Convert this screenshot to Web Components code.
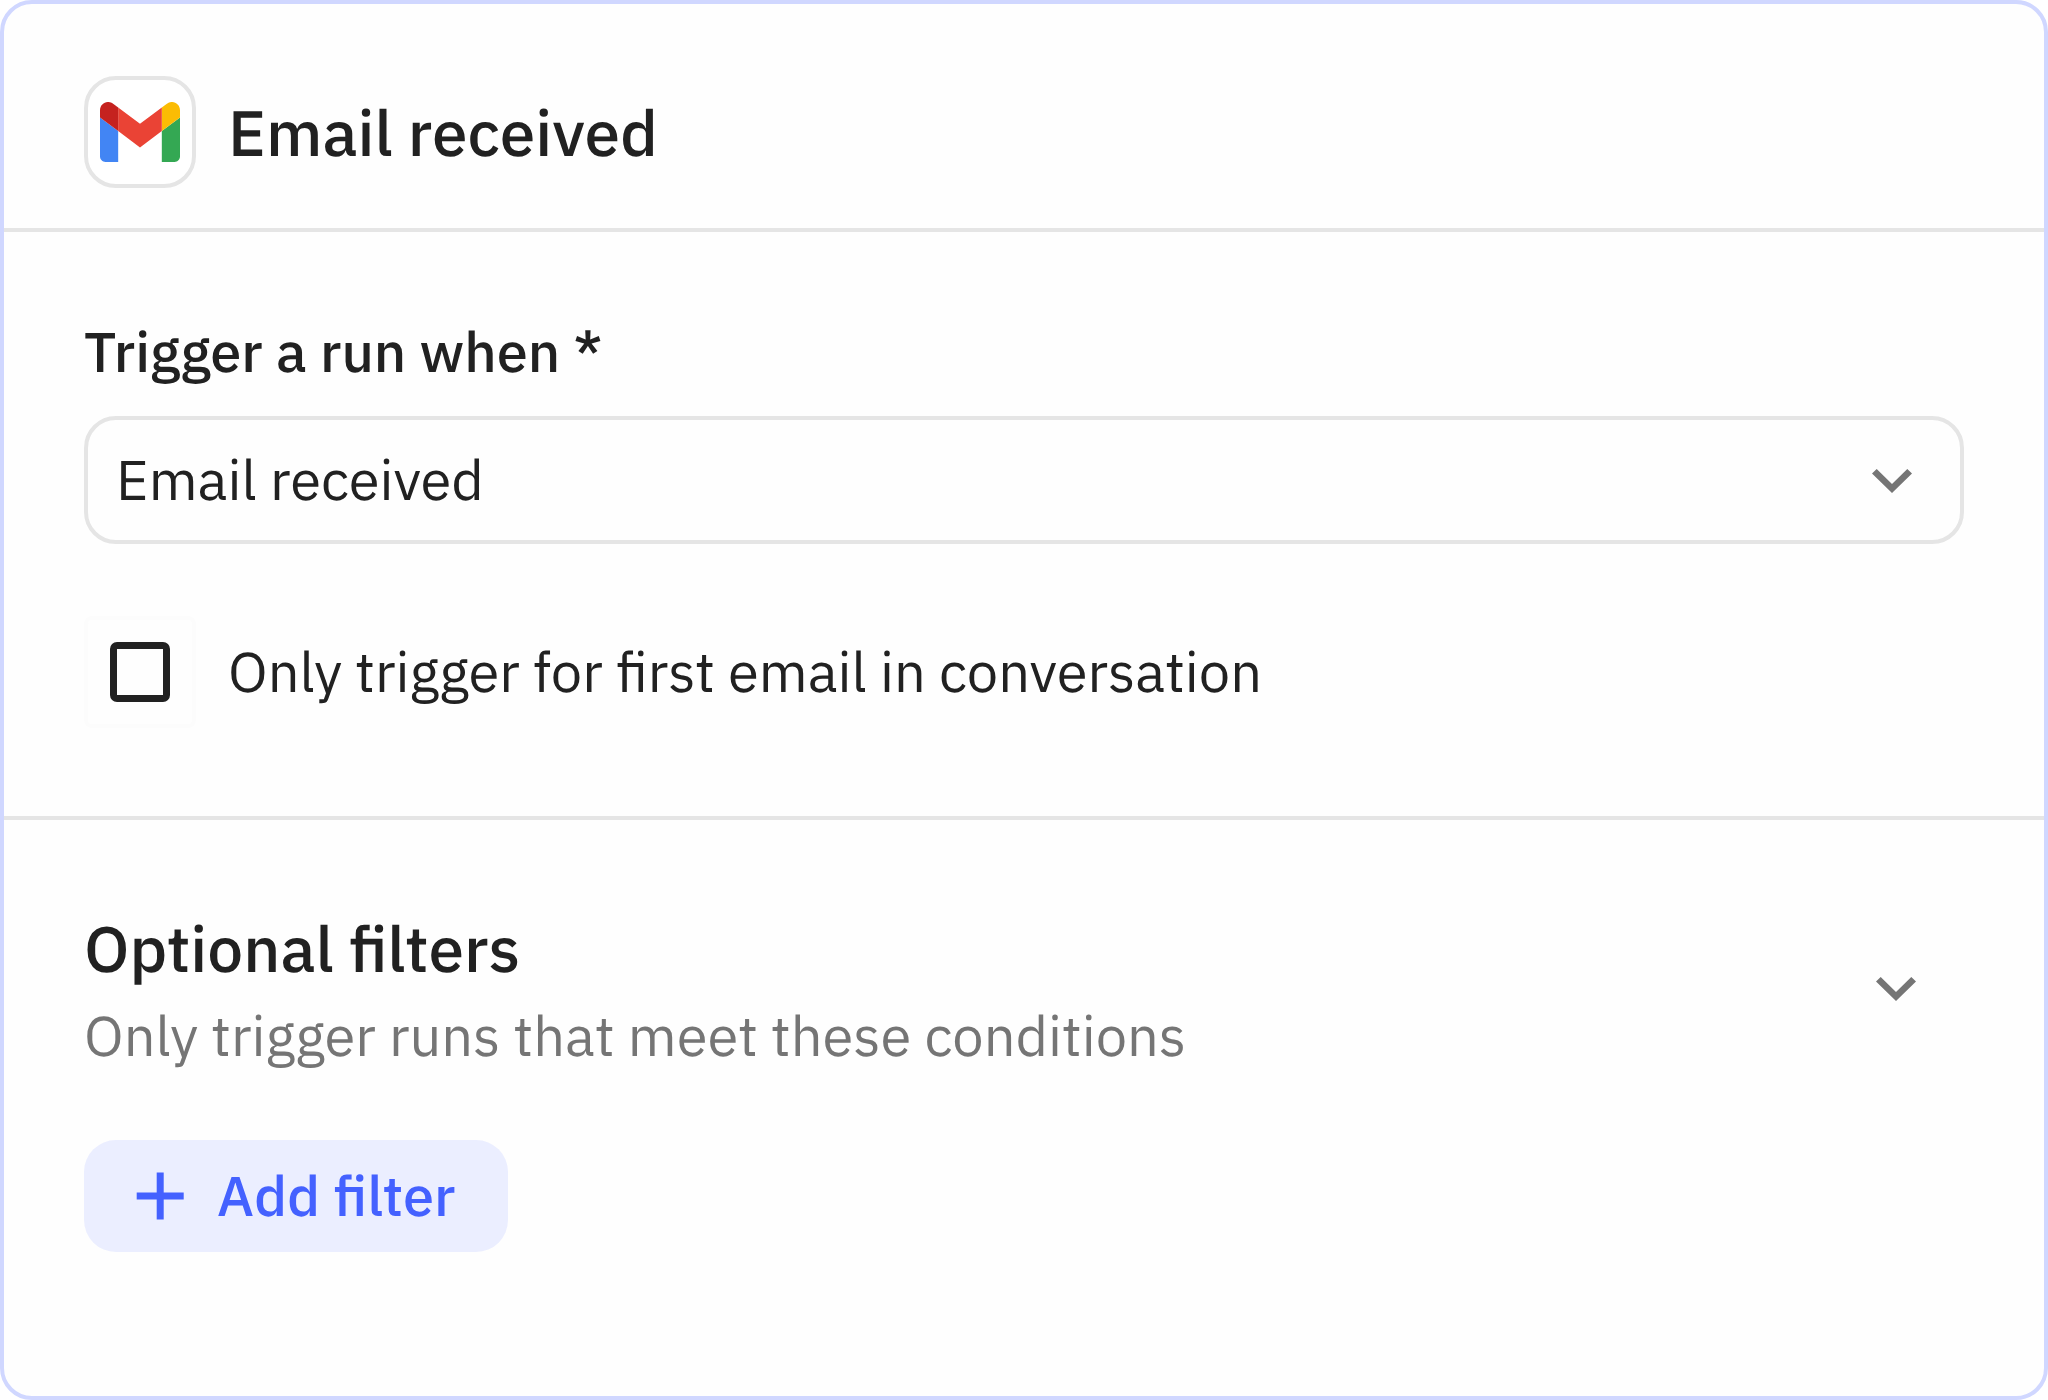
<!DOCTYPE html>
<html lang="en">
<head>
<meta charset="utf-8">
<title>Email received</title>
<style>
  html, body { height: 100%; }
  body {
    margin: 0;
    background: #fff;
    color: #212121;
    font: 400 56px/80px "IBM Plex Sans", "Liberation Sans", sans-serif;
    text-rendering: geometricPrecision;
  }
</style>
</head>
<body>
<trigger-card>
  <card-header slot="header" heading="Email received"><gmail-logo></gmail-logo></card-header>
  <card-section>
    <select-field label="Trigger a run when *" value="Email received"></select-field>
    <check-field label="Only trigger for first email in conversation"></check-field>
  </card-section>
  <card-section>
    <filter-group heading="Optional filters" hint="Only trigger runs that meet these conditions">
      <add-button>Add filter</add-button>
    </filter-group>
  </card-section>
</trigger-card>

<script>
const BASE = `<style>
  *, :host { box-sizing: border-box; }
  :host { display: block; }
  svg { display: block; flex: none; }
  button, select, input { margin: 0; font: inherit; color: inherit; text-rendering: inherit; }
</style>`;

class BaseElement extends HTMLElement {
  connectedCallback() {
    if (this.shadowRoot) return;
    this.attachShadow({ mode: 'open' }).innerHTML = BASE + this.render();
  }
}

customElements.define('trigger-card', class extends BaseElement {
  render() {
    return `<style>
      :host { min-height: 100%; border: 4px solid #d0d7ff; border-radius: 32px; background: #fefefe; overflow: hidden; }
    </style><slot name="header"></slot><slot></slot>`;
  }
});

customElements.define('card-header', class extends BaseElement {
  render() {
    return `<style>
      :host { padding: 72px 80px 40px; border-bottom: 4px solid #e5e5e5; }
      header { display: flex; align-items: center; gap: 32px; }
      .logo { display: flex; align-items: center; justify-content: center; width: 112px; height: 112px;
              border: 4px solid #e5e5e5; border-radius: 32px; background: #fff; }
      h1 { margin: 0; font-size: 64px; line-height: 96px; font-weight: 500; }
    </style>
    <header><span class="logo"><slot></slot></span><h1>${this.getAttribute('heading')}</h1></header>`;
  }
});

customElements.define('gmail-logo', class extends BaseElement {
  render() {
    return `<svg width="80" height="60" viewBox="52 42 88 66" aria-hidden="true">
      <path fill="#4285f4" d="M58 108h14V74L52 59v43c0 3.32 2.69 6 6 6"/>
      <path fill="#34a853" d="M120 108h14c3.32 0 6-2.69 6-6V59l-20 15"/>
      <path fill="#fbbc04" d="M120 48v26l20-15v-8c0-7.42-8.47-11.65-14.4-7.2"/>
      <path fill="#ea4335" d="M72 74V48l24 18 24-18v26L96 92"/>
      <path fill="#c5221f" d="M52 51v8l20 15V48l-5.6-4.2c-5.94-4.45-14.4-.22-14.4 7.2"/>
    </svg>`;
  }
});

customElements.define('chevron-down', class extends BaseElement {
  render() {
    return `<svg width="40" height="26" viewBox="0 -2 40 26" aria-hidden="true">
      <path fill="#757575" d="M4.7 0 20 15 35.3 0 40 4.6 20 24 0 4.6z"/>
    </svg>`;
  }
});

customElements.define('card-section', class extends BaseElement {
  render() {
    return `<style>
      :host { display: flex; flex-direction: column; gap: 72px; padding: 80px 80px 88px; border-bottom: 4px solid #e5e5e5; }
      :host(:last-child) { border-bottom: 0; }
    </style><slot></slot>`;
  }
});

customElements.define('select-field', class extends BaseElement {
  render() {
    return `<style>
      :host { display: flex; flex-direction: column; gap: 24px; }
      label { font-weight: 500; }
      .box { display: grid; align-items: center; }
      .box > * { grid-area: 1 / 1; }
      select { appearance: none; width: 100%; height: 128px; padding: 0 100px 0 28px;
               border: 4px solid #e5e5e5; border-radius: 32px; background: transparent; }
      chevron-down { justify-self: end; margin-right: 52px; pointer-events: none; }
    </style>
    <label for="field">${this.getAttribute('label')}</label>
    <div class="box">
      <select id="field"><option>${this.getAttribute('value')}</option></select>
      <chevron-down></chevron-down>
    </div>`;
  }
});

customElements.define('check-field', class extends BaseElement {
  render() {
    return `<style>
      label { display: flex; align-items: center; gap: 32px; }
      .halo { display: flex; align-items: center; justify-content: center; width: 112px; height: 112px;
              border: 4px solid #fcfcfc; border-radius: 8px; }
      input { appearance: none; width: 60px; height: 60px; border: 7px solid #212121; border-radius: 7px; }
      input:checked { background: #212121; }
    </style>
    <label><span class="halo"><input type="checkbox"></span><span>${this.getAttribute('label')}</span></label>`;
  }
});

customElements.define('filter-group', class extends BaseElement {
  render() {
    return `<style>
      :host { display: flex; flex-direction: column; align-items: flex-start; gap: 64px; }
      header { display: flex; align-items: center; justify-content: space-between; align-self: stretch; padding-right: 48px; }
      h2 { margin: 0; font-size: 64px; line-height: 96px; font-weight: 500; }
      p { margin: 0; color: #757575; }
      button { padding: 0; border: 0; background: none; }
    </style>
    <header>
      <div><h2>${this.getAttribute('heading')}</h2><p>${this.getAttribute('hint')}</p></div>
      <button type="button" aria-label="Toggle" aria-expanded="true"><chevron-down></chevron-down></button>
    </header>
    <slot></slot>`;
  }
});

customElements.define('add-button', class extends BaseElement {
  render() {
    return `<style>
      button { display: flex; align-items: center; gap: 33px; height: 112px; padding: 0 52px; border: 0;
               border-radius: 32px; background: #ebeeff; color: #4461ff; font-weight: 500; }
    </style>
    <button type="button">
      <svg width="48" height="48" viewBox="0 0 48 48" aria-hidden="true">
        <path fill="currentColor" d="M20.7.5h7v20h20v7h-20v20h-7v-20h-20v-7h20z"/>
      </svg>
      <slot></slot>
    </button>`;
  }
});
</script>
</body>
</html>
